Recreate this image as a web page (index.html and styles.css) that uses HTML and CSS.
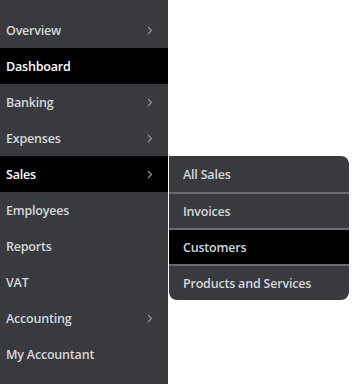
FILE: index.html
```html
<!DOCTYPE html>
<html lang="en">
<head>
  <meta charset="UTF-8">
  <title>Navigation</title>
  <link rel="stylesheet" href="styles.css">
</head>
<body>
  <div class="page">
    <nav class="sidebar">
      <div class="nav-top"></div>
      <a class="nav-item">Overview <svg class="chev" viewBox="0 0 6 9"><path d="M1 1l3.5 3.5L1 8"/></svg></a>
      <a class="nav-item active">Dashboard</a>
      <a class="nav-item">Banking <svg class="chev" viewBox="0 0 6 9"><path d="M1 1l3.5 3.5L1 8"/></svg></a>
      <a class="nav-item">Expenses <svg class="chev" viewBox="0 0 6 9"><path d="M1 1l3.5 3.5L1 8"/></svg></a>
      <a class="nav-item open">Sales <svg class="chev" viewBox="0 0 6 9"><path d="M1 1l3.5 3.5L1 8"/></svg>
        <div class="flyout">
          <div class="fly-item">All Sales</div>
          <div class="fly-item">Invoices</div>
          <div class="fly-item current">Customers</div>
          <div class="fly-item">Products and Services</div>
        </div>
      </a>
      <a class="nav-item">Employees</a>
      <a class="nav-item">Reports</a>
      <a class="nav-item">VAT</a>
      <a class="nav-item">Accounting <svg class="chev" viewBox="0 0 6 9"><path d="M1 1l3.5 3.5L1 8"/></svg></a>
      <a class="nav-item">My Accountant</a>
    </nav>
    <main class="content"></main>
  </div>
</body>
</html>
```
FILE: styles.css
```css
body {
  margin: 0;
  font-family: 'Open Sans', sans-serif;
  background-color: white;
}

.page {
  display: flex;
  height: 384px;
}

.sidebar {
  width: 168px;
  background-color: #393a3d;
  display: flex;
  flex-direction: column;
}

.nav-top {
  height: 12px;
}

.nav-item {
  position: relative;
  height: 36px;
  display: flex;
  align-items: center;
  justify-content: space-between;
  padding: 1px 15px 0 6px;
  box-sizing: border-box;
  font-size: 12.5px;
  font-weight: 600;
  letter-spacing: -0.2px;
  color: #d4d7dc;
}

.nav-item.active,
.nav-item.open {
  background-color: black;
  color: white;
}

.chev {
  width: 6px;
  height: 9px;
  fill: none;
  stroke: #8d9096;
  stroke-width: 1.3;
}

.flyout {
  position: absolute;
  left: 169px;
  top: 0;
  width: 180px;
  background-color: #393a3d;
  border-radius: 0 8px 8px 8px;
  overflow: hidden;
}

.fly-item {
  height: 36px;
  display: flex;
  align-items: center;
  padding: 1px 0 0 14px;
  font-size: 12.5px;
  font-weight: 600;
  letter-spacing: -0.2px;
  color: #d4d7dc;
  border-top: 2px solid #6b6c72;
  box-sizing: border-box;
}

.fly-item:first-child {
  border-top: none;
}

.fly-item.current {
  background-color: black;
}

.content {
  flex: 1;
}
```
